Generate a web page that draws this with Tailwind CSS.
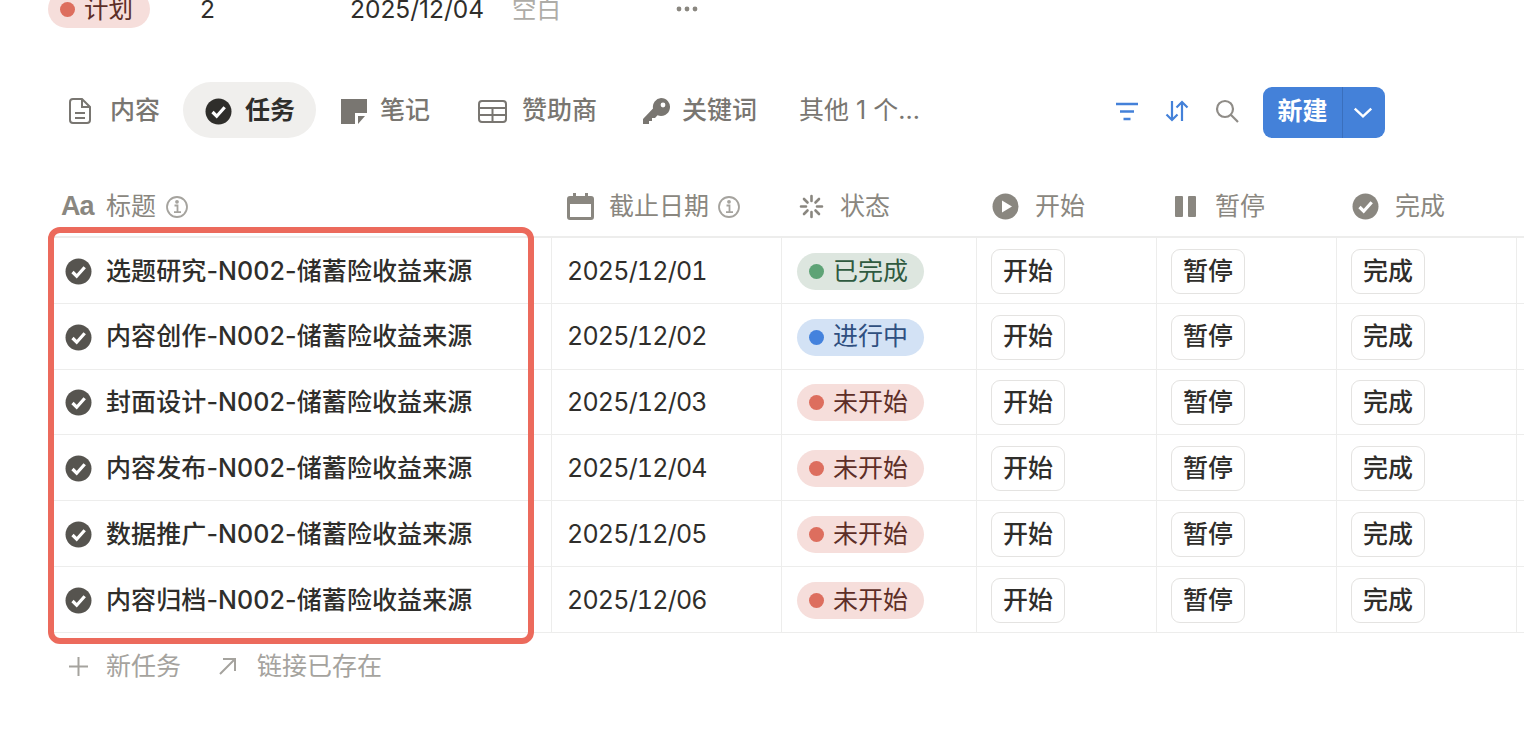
<!DOCTYPE html>
<html lang="zh">

<head>
    <meta charset="UTF-8" />
    <title>任务</title>
    <script src="https://cdn.jsdelivr.net/npm/@tailwindcss/browser@4"></script>
</head>

<body class="bg-white w-[1524px] h-[734px] overflow-hidden relative font-['Inter','Noto_Sans_CJK_SC',sans-serif] text-[25px] text-[#2f2e2b]">
    <!-- row cut off by the top edge -->
    <div class="flex items-center h-[38px] mt-[-10px] ml-[48px] text-[24.5px]">
        <div class="w-[152px]">
            <span class="inline-flex items-center w-[102px] h-[38px] pl-[12px] gap-[9px] rounded-full bg-[#f6dedb] text-[#5d2e27]">
                <i class="w-[15px] h-[15px] rounded-full bg-[#dd6e5e]"></i>计划
            </span>
        </div>
        <span class="w-[150px] font-normal">2</span>
        <span class="w-[162px]">2025/12/04</span>
        <span class="w-[163px] text-[#aeaca7]">空白</span>
        <svg class="w-[24px] h-[6px]" viewBox="0 0 24 6" fill="#8a8780"><circle cx="4" cy="3" r="2.4"/><circle cx="12" cy="3" r="2.4"/><circle cx="20" cy="3" r="2.4"/></svg>
    </div>

    <!-- tabs -->
    <div class="flex items-center h-[56px] pt-[2px] mt-[54px] ml-[48px] text-[#797671] font-medium">
        <div class="flex items-center w-[135px] pl-[20px] gap-[18px]">
            <svg class="w-[24px] h-[28px] shrink-0" viewBox="0 0 24 28" fill="none" stroke="#797671" stroke-width="2"><path d="M5 2h9l8 8v13a3 3 0 0 1-3 3H5a3 3 0 0 1-3-3V5a3 3 0 0 1 3-3z"/><path d="M14 2v8h8M7 16h10M7 21h10"/></svg>
            内容
        </div>
        <div class="flex items-center self-start mt-[-2px] pt-[2px] w-[133px] h-[56px] pl-[22px] gap-[13px] rounded-full bg-[#f0efed] text-[#2f2e2b] font-semibold">
            <svg class="w-[27px] h-[27px] shrink-0" viewBox="0 0 27 27"><circle cx="13.5" cy="13.5" r="13" fill="#2f2e2b"/><path d="M7.5 14l4.200 4.200 8-9" fill="none" stroke="#fff" stroke-width="3.200"/></svg>
            任务
        </div>
        <div class="flex items-center w-[137px] pl-[25px] gap-[13px]">
            <svg class="w-[26px] h-[25px] shrink-0" viewBox="0 0 26 25" fill="#797671"><path d="M0 0h26v14h-12v11H0z"/><path d="M17 17h7l-7 8z"/></svg>
            笔记
        </div>
        <div class="flex items-center w-[173px] pl-[25px] gap-[15px]">
            <svg class="w-[29px] h-[23px] shrink-0" viewBox="0 0 29 23" fill="none" stroke="#797671" stroke-width="2"><rect x="1" y="1" width="27" height="21" rx="3"/><path d="M1 8h27M1 15h27M14.500 8v14"/></svg>
            赞助商
        </div>
        <div class="flex items-center w-[173px] pl-[17px] gap-[12px]">
            <svg class="w-[27px] h-[27px] shrink-0" viewBox="0 0 27 27" fill="#797671"><path d="M18 0a9 9 0 1 1-3.500 17.300L12 20H9v3H6v3H0v-5L10 10.500A9 9 0 0 1 18 0z"/><circle cx="20" cy="7" r="2.400" fill="#fff"/></svg>
            关键词
        </div>
        <span class="w-[316px] font-normal">其他 1 个...</span>
        <div class="flex items-center gap-[26px] w-[148px]">
            <svg class="w-[24px] h-[19px]" viewBox="0 0 24 19" stroke="#4481d9" stroke-width="2.600" fill="none"><path d="M1 2h22M5 9.500h14M8.500 17h7"/></svg>
            <svg class="w-[24px] h-[24px]" viewBox="0 0 24 24" stroke="#4481d9" stroke-width="2.200" fill="none"><path d="M7 2v19M1.500 15.500L7 21l5.500-5.500M17 22V3M11.500 8.500L17 3l5.500 5.500"/></svg>
            <svg class="w-[24px] h-[24px]" viewBox="0 0 24 24" stroke="#8f8c87" stroke-width="2.200" fill="none"><circle cx="10" cy="10" r="8"/><path d="M15.800 15.800L23 23"/></svg>
        </div>
        <div class="flex items-center h-[51px] mt-[2px] w-[122px] rounded-[9px] bg-[#4481d9] text-white font-semibold">
            <span class="w-[80px] h-full flex items-center justify-center border-r border-[#3a6fbd]">新建</span>
            <svg class="w-[20px] h-[11px] ml-[10px]" viewBox="0 0 18 10" fill="none" stroke="#fff" stroke-width="2.200"><path d="M1.500 1.500L9 8.500l7.500-7"/></svg>
        </div>
    </div>

    <!-- table -->
    <div class="ml-[48px] mt-[38px] w-[1476px] text-[#8a8780]">
        <div class="grid grid-cols-[504px_230px_195px_180px_180px_180px] h-[62px] pt-[1px] border-b-2 border-[#ededec] items-center">
            <div class="flex items-center pl-[13px] gap-[10px]">
                <span class="w-[35px] font-['Liberation_Sans',sans-serif] font-bold text-[27px] tracking-[-1px]">Aa</span>
                <span>标题</span>
                <svg class="w-[22px] h-[22px]" viewBox="0 0 22 22" fill="none" stroke="#a5a39e" stroke-width="1.800"><circle cx="11" cy="11" r="10"/><path d="M8.500 9.500H11.500V16M8 16.200h7"/><circle cx="11" cy="5.800" r="1" fill="#a5a39e"/></svg>
            </div>
            <div class="flex items-center pl-[15px] gap-[15px]">
                <svg class="w-[27px] h-[27px]" viewBox="0 0 27 27" fill="#8a8780"><path d="M6 0h3v3h9V0h3v3h3a3 3 0 0 1 3 3v18a3 3 0 0 1-3 3H3a3 3 0 0 1-3-3V6a3 3 0 0 1 3-3h3zM3 11v13h21V11z"/></svg>
                <span class="flex items-center gap-[9px]">截止日期
                    <svg class="w-[22px] h-[22px]" viewBox="0 0 22 22" fill="none" stroke="#a5a39e" stroke-width="1.800"><circle cx="11" cy="11" r="10"/><path d="M8.500 9.500H11.500V16M8 16.200h7"/><circle cx="11" cy="5.800" r="1" fill="#a5a39e"/></svg>
                </span>
            </div>
            <div class="flex items-center pl-[17px] gap-[16px]">
                <svg class="w-[25px] h-[25px]" viewBox="0 0 25 25" stroke="#8a8780" stroke-width="2.600" stroke-linecap="round" fill="none"><path d="M12.500 2v5M12.500 18v5M2 12.500h5M18 12.500h5M5 5l3.500 3.500M16.500 16.500L20 20M5 20l3.500-3.500M16.500 8.500L20 5"/></svg>
                状态
            </div>
            <div class="flex items-center pl-[15px] gap-[16px]">
                <svg class="w-[27px] h-[27px]" viewBox="0 0 27 27"><circle cx="13.500" cy="13.500" r="13" fill="#8a8780"/><path d="M10 7.500v12l10-6z" fill="#fff"/></svg>
                开始
            </div>
            <div class="flex items-center pl-[18px] gap-[18px]">
                <svg class="w-[22px] h-[21px]" viewBox="0 0 22 21" fill="#8a8780"><rect width="8" height="21" rx="1"/><rect x="13" width="8" height="21" rx="1"/></svg>
                暂停
            </div>
            <div class="flex items-center pl-[15px] gap-[16px]">
                <svg class="w-[27px] h-[27px]" viewBox="0 0 27 27"><circle cx="13.500" cy="13.500" r="13" fill="#8a8780"/><path d="M7.500 14l4.200 4.200 8-9" fill="none" stroke="#fff" stroke-width="3.200"/></svg>
                完成
            </div>
        </div>
        <div id="rows" class="text-[#2f2e2b]">
            <div class="grid grid-cols-[504px_230px_195px_180px_180px_180px_1fr] h-[65.800px] border-b border-[#ededec]">
                <div class="flex items-center pl-[17px] pt-[2px] gap-[14px] border-r border-[#ededec] font-medium tracking-[0.1px]"><svg class="w-[27px] h-[27px]" viewBox="0 0 27 27"><circle cx="13.500" cy="13.500" r="13" fill="#56544f"/><path d="M7.500 14l4.200 4.200 8-9" fill="none" stroke="#fff" stroke-width="3.200"/></svg>选题研究-N002-储蓄险收益来源</div>
                <div class="flex items-center pl-[15px] pt-[2px] border-r border-[#ededec] tracking-[-0.8px] tabular-nums">2025/12/01</div>
                <div class="flex items-center pl-[15px] pt-[2px] border-r border-[#ededec]"><span class="inline-flex items-center w-[127px] h-[37px] pl-[12px] gap-[9px] rounded-full bg-[#dde6df] text-[#2f5a3f]"><i class="w-[15px] h-[15px] rounded-full bg-[#5ea376]"></i>已完成</span></div>
                <div class="flex items-center pl-[14px] pt-[2px] border-r border-[#ededec] font-medium"><span class="flex items-center justify-center w-[74px] h-[45px] rounded-[9px] border border-[#e4e3e1]">开始</span></div>
                <div class="flex items-center pl-[14px] pt-[2px] border-r border-[#ededec] font-medium"><span class="flex items-center justify-center w-[74px] h-[45px] rounded-[9px] border border-[#e4e3e1]">暂停</span></div>
                <div class="flex items-center pl-[14px] pt-[2px] border-r border-[#ededec] font-medium"><span class="flex items-center justify-center w-[74px] h-[45px] rounded-[9px] border border-[#e4e3e1]">完成</span></div>
            </div>
            <div class="grid grid-cols-[504px_230px_195px_180px_180px_180px_1fr] h-[65.800px] border-b border-[#ededec]">
                <div class="flex items-center pl-[17px] pt-[2px] gap-[14px] border-r border-[#ededec] font-medium tracking-[0.1px]"><svg class="w-[27px] h-[27px]" viewBox="0 0 27 27"><circle cx="13.500" cy="13.500" r="13" fill="#56544f"/><path d="M7.500 14l4.200 4.200 8-9" fill="none" stroke="#fff" stroke-width="3.200"/></svg>内容创作-N002-储蓄险收益来源</div>
                <div class="flex items-center pl-[15px] pt-[2px] border-r border-[#ededec] tracking-[-0.8px] tabular-nums">2025/12/02</div>
                <div class="flex items-center pl-[15px] pt-[2px] border-r border-[#ededec]"><span class="inline-flex items-center w-[127px] h-[37px] pl-[12px] gap-[9px] rounded-full bg-[#d3e2f5] text-[#2f4f80]"><i class="w-[15px] h-[15px] rounded-full bg-[#4482dd]"></i>进行中</span></div>
                <div class="flex items-center pl-[14px] pt-[2px] border-r border-[#ededec] font-medium"><span class="flex items-center justify-center w-[74px] h-[45px] rounded-[9px] border border-[#e4e3e1]">开始</span></div>
                <div class="flex items-center pl-[14px] pt-[2px] border-r border-[#ededec] font-medium"><span class="flex items-center justify-center w-[74px] h-[45px] rounded-[9px] border border-[#e4e3e1]">暂停</span></div>
                <div class="flex items-center pl-[14px] pt-[2px] border-r border-[#ededec] font-medium"><span class="flex items-center justify-center w-[74px] h-[45px] rounded-[9px] border border-[#e4e3e1]">完成</span></div>
            </div>
            <div class="grid grid-cols-[504px_230px_195px_180px_180px_180px_1fr] h-[65.800px] border-b border-[#ededec]">
                <div class="flex items-center pl-[17px] pt-[2px] gap-[14px] border-r border-[#ededec] font-medium tracking-[0.1px]"><svg class="w-[27px] h-[27px]" viewBox="0 0 27 27"><circle cx="13.500" cy="13.500" r="13" fill="#56544f"/><path d="M7.500 14l4.200 4.200 8-9" fill="none" stroke="#fff" stroke-width="3.200"/></svg>封面设计-N002-储蓄险收益来源</div>
                <div class="flex items-center pl-[15px] pt-[2px] border-r border-[#ededec] tracking-[-0.8px] tabular-nums">2025/12/03</div>
                <div class="flex items-center pl-[15px] pt-[2px] border-r border-[#ededec]"><span class="inline-flex items-center w-[127px] h-[37px] pl-[12px] gap-[9px] rounded-full bg-[#f6dedb] text-[#5d2e27]"><i class="w-[15px] h-[15px] rounded-full bg-[#dd6e5e]"></i>未开始</span></div>
                <div class="flex items-center pl-[14px] pt-[2px] border-r border-[#ededec] font-medium"><span class="flex items-center justify-center w-[74px] h-[45px] rounded-[9px] border border-[#e4e3e1]">开始</span></div>
                <div class="flex items-center pl-[14px] pt-[2px] border-r border-[#ededec] font-medium"><span class="flex items-center justify-center w-[74px] h-[45px] rounded-[9px] border border-[#e4e3e1]">暂停</span></div>
                <div class="flex items-center pl-[14px] pt-[2px] border-r border-[#ededec] font-medium"><span class="flex items-center justify-center w-[74px] h-[45px] rounded-[9px] border border-[#e4e3e1]">完成</span></div>
            </div>
            <div class="grid grid-cols-[504px_230px_195px_180px_180px_180px_1fr] h-[65.800px] border-b border-[#ededec]">
                <div class="flex items-center pl-[17px] pt-[2px] gap-[14px] border-r border-[#ededec] font-medium tracking-[0.1px]"><svg class="w-[27px] h-[27px]" viewBox="0 0 27 27"><circle cx="13.500" cy="13.500" r="13" fill="#56544f"/><path d="M7.500 14l4.200 4.200 8-9" fill="none" stroke="#fff" stroke-width="3.200"/></svg>内容发布-N002-储蓄险收益来源</div>
                <div class="flex items-center pl-[15px] pt-[2px] border-r border-[#ededec] tracking-[-0.8px] tabular-nums">2025/12/04</div>
                <div class="flex items-center pl-[15px] pt-[2px] border-r border-[#ededec]"><span class="inline-flex items-center w-[127px] h-[37px] pl-[12px] gap-[9px] rounded-full bg-[#f6dedb] text-[#5d2e27]"><i class="w-[15px] h-[15px] rounded-full bg-[#dd6e5e]"></i>未开始</span></div>
                <div class="flex items-center pl-[14px] pt-[2px] border-r border-[#ededec] font-medium"><span class="flex items-center justify-center w-[74px] h-[45px] rounded-[9px] border border-[#e4e3e1]">开始</span></div>
                <div class="flex items-center pl-[14px] pt-[2px] border-r border-[#ededec] font-medium"><span class="flex items-center justify-center w-[74px] h-[45px] rounded-[9px] border border-[#e4e3e1]">暂停</span></div>
                <div class="flex items-center pl-[14px] pt-[2px] border-r border-[#ededec] font-medium"><span class="flex items-center justify-center w-[74px] h-[45px] rounded-[9px] border border-[#e4e3e1]">完成</span></div>
            </div>
            <div class="grid grid-cols-[504px_230px_195px_180px_180px_180px_1fr] h-[65.800px] border-b border-[#ededec]">
                <div class="flex items-center pl-[17px] pt-[2px] gap-[14px] border-r border-[#ededec] font-medium tracking-[0.1px]"><svg class="w-[27px] h-[27px]" viewBox="0 0 27 27"><circle cx="13.500" cy="13.500" r="13" fill="#56544f"/><path d="M7.500 14l4.200 4.200 8-9" fill="none" stroke="#fff" stroke-width="3.200"/></svg>数据推广-N002-储蓄险收益来源</div>
                <div class="flex items-center pl-[15px] pt-[2px] border-r border-[#ededec] tracking-[-0.8px] tabular-nums">2025/12/05</div>
                <div class="flex items-center pl-[15px] pt-[2px] border-r border-[#ededec]"><span class="inline-flex items-center w-[127px] h-[37px] pl-[12px] gap-[9px] rounded-full bg-[#f6dedb] text-[#5d2e27]"><i class="w-[15px] h-[15px] rounded-full bg-[#dd6e5e]"></i>未开始</span></div>
                <div class="flex items-center pl-[14px] pt-[2px] border-r border-[#ededec] font-medium"><span class="flex items-center justify-center w-[74px] h-[45px] rounded-[9px] border border-[#e4e3e1]">开始</span></div>
                <div class="flex items-center pl-[14px] pt-[2px] border-r border-[#ededec] font-medium"><span class="flex items-center justify-center w-[74px] h-[45px] rounded-[9px] border border-[#e4e3e1]">暂停</span></div>
                <div class="flex items-center pl-[14px] pt-[2px] border-r border-[#ededec] font-medium"><span class="flex items-center justify-center w-[74px] h-[45px] rounded-[9px] border border-[#e4e3e1]">完成</span></div>
            </div>
            <div class="grid grid-cols-[504px_230px_195px_180px_180px_180px_1fr] h-[65.800px] border-b border-[#ededec]">
                <div class="flex items-center pl-[17px] pt-[2px] gap-[14px] border-r border-[#ededec] font-medium tracking-[0.1px]"><svg class="w-[27px] h-[27px]" viewBox="0 0 27 27"><circle cx="13.500" cy="13.500" r="13" fill="#56544f"/><path d="M7.500 14l4.200 4.200 8-9" fill="none" stroke="#fff" stroke-width="3.200"/></svg>内容归档-N002-储蓄险收益来源</div>
                <div class="flex items-center pl-[15px] pt-[2px] border-r border-[#ededec] tracking-[-0.8px] tabular-nums">2025/12/06</div>
                <div class="flex items-center pl-[15px] pt-[2px] border-r border-[#ededec]"><span class="inline-flex items-center w-[127px] h-[37px] pl-[12px] gap-[9px] rounded-full bg-[#f6dedb] text-[#5d2e27]"><i class="w-[15px] h-[15px] rounded-full bg-[#dd6e5e]"></i>未开始</span></div>
                <div class="flex items-center pl-[14px] pt-[2px] border-r border-[#ededec] font-medium"><span class="flex items-center justify-center w-[74px] h-[45px] rounded-[9px] border border-[#e4e3e1]">开始</span></div>
                <div class="flex items-center pl-[14px] pt-[2px] border-r border-[#ededec] font-medium"><span class="flex items-center justify-center w-[74px] h-[45px] rounded-[9px] border border-[#e4e3e1]">暂停</span></div>
                <div class="flex items-center pl-[14px] pt-[2px] border-r border-[#ededec] font-medium"><span class="flex items-center justify-center w-[74px] h-[45px] rounded-[9px] border border-[#e4e3e1]">完成</span></div>
            </div>
        </div>
        <div class="flex items-center h-[68px] pl-[20px] text-[#a5a39e]">
            <svg class="w-[21px] h-[21px] mr-[17px]" viewBox="0 0 21 21" stroke="#a5a39e" stroke-width="2" fill="none"><path d="M10.500 1v19M1 10.500h19"/></svg>
            <span class="w-[112px]">新任务</span>
            <svg class="w-[19px] h-[19px] mr-[20px]" viewBox="0 0 19 19" stroke="#a5a39e" stroke-width="2" fill="none"><path d="M2 17L17 2M5 2h12v12"/></svg>
            <span>链接已存在</span>
        </div>
    </div>

    <!-- red annotation frame over the title column -->
    <div class="absolute left-[48px] top-[227px] w-[486px] h-[417px] border-[6px] border-[#ec6a5c] rounded-[12px]"></div>
</body>

</html>
